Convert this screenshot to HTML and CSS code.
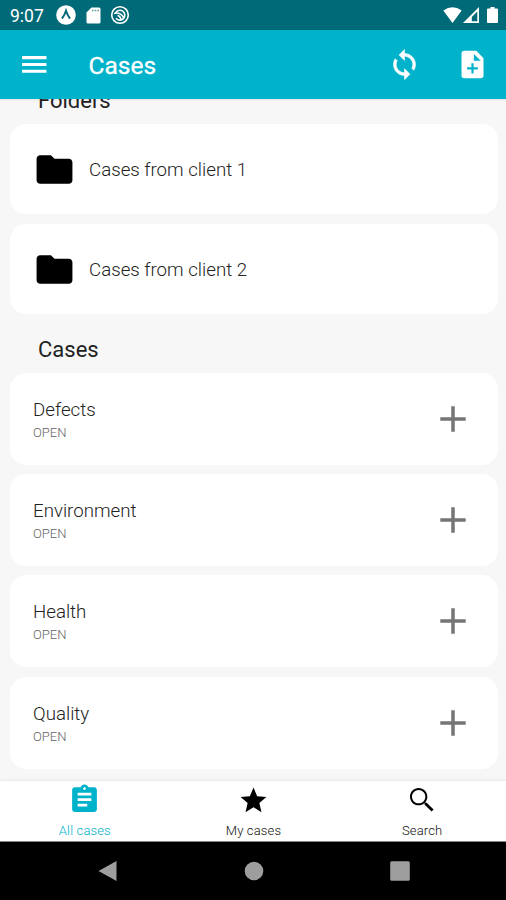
FILE: index.html
```html
<!DOCTYPE html>
<html lang="en">
<head>
<meta charset="utf-8">
<title>Cases</title>
<link rel="stylesheet" href="styles.css">
</head>
<body>
<div class="screen">
  <div class="status">
    <span class="time">9:07</span>
    <svg class="expo" viewBox="0 0 20 20"><circle cx="10" cy="10" r="9.800" fill="#fff"/><path d="M6 13.500Q8.500 10.500 10 5.800Q11.500 10.500 14 13.500" fill="none" stroke="#00697a" stroke-width="2"/></svg>
    <svg class="sd" viewBox="0 0 15 17"><path d="M5.500 .5H13a1.500 1.500 0 0 1 1.500 1.500v13a1.500 1.500 0 0 1-1.500 1.500H2A1.500 1.500 0 0 1 .5 15V5.500z" fill="#fff"/><path d="M6 3.500h1.500M8.800 3.500h1.500M11.500 3.500H13" stroke="#00697a" stroke-opacity=".7" stroke-width="1.500"/></svg>
    <svg class="swirl" viewBox="0 0 20 20" fill="none" stroke="#fff"><circle cx="10" cy="10" r="8.300" stroke-width="1.600"/><path d="M5.500 8A4.900 4.900 0 1 1 6 13.200M4 8.500Q10 6.500 13.500 12.500M7.500 10.500Q9.500 10.500 11 14" stroke-width="1.600"/></svg>
    <span class="grow"></span>
    <svg class="wifi" viewBox="0 0 19 16"><path d="M.3 3.500Q9.500-3.200 18.700 3.500L9.500 16z" fill="#fff"/></svg>
    <svg class="signal" viewBox="0 0 16 16"><path d="M16 0v16H0zM14.300 4.500L8.800 10v4.300h5.500z" fill="#fff" fill-rule="evenodd"/></svg>
    <svg class="battery" viewBox="0 0 11 16"><path d="M3.500 0h4v1.500H10a1 1 0 0 1 1 1V15a1 1 0 0 1-1 1H1a1 1 0 0 1-1-1V2.500a1 1 0 0 1 1-1h2.500z" fill="#fff"/></svg>
  </div>
  <header class="appbar">
    <svg class="icon menu" viewBox="0 0 24 24"><path d="M3 18.100h18v-2.300H3zm0-5h18v-2.300H3zm0-7.300v2.300h18V5.800z"/></svg>
    <h1>Cases</h1>
    <svg class="icon sync" viewBox="0 0 24 24"><path d="M12 4V1L8 5l4 4V6c3.310 0 6 2.690 6 6 0 1.010-.25 1.970-.7 2.800l1.460 1.460C19.540 15.030 20 13.570 20 12c0-4.420-3.580-8-8-8zm0 14c-3.310 0-6-2.690-6-6 0-1.010.25-1.970.7-2.800L5.240 7.740C4.460 8.970 4 10.430 4 12c0 4.420 3.580 8 8 8v3l4-4-4-4z"/></svg>
    <svg class="icon" viewBox="0 0 24 24"><path fill-rule="evenodd" d="M6 2h8.800L20 7.500V20a2 2 0 0 1-2 2H6a2 2 0 0 1-2-2V4a2 2 0 0 1 2-2zM13 4.300v4.900h5zM11.200 11v3H8.100v1.600h3.100v3h1.600v-3h3.100v-1.600h-3.100v-3z"/></svg>
  </header>
  <main class="content">
    <h2 class="folders-title">Folders</h2>
    <section class="folders">
      <div class="folder"><svg viewBox="0 0 24 24"><path d="M10 4H4c-1.100 0-2 .9-2 2v12c0 1.100.9 2 2 2h16c1.100 0 2-.9 2-2V8c0-1.100-.9-2-2-2h-8z"/></svg><span>Cases from client 1</span></div>
      <div class="folder"><svg viewBox="0 0 24 24"><path d="M10 4H4c-1.100 0-2 .9-2 2v12c0 1.100.9 2 2 2h16c1.100 0 2-.9 2-2V8c0-1.100-.9-2-2-2h-8z"/></svg><span>Cases from client 2</span></div>
    </section>
    <h2 class="cases-title">Cases</h2>
    <section class="cases">
      <div class="case"><div><h3>Defects</h3><p>OPEN</p></div><svg viewBox="0 0 26 26"><path d="M13 .3v25.400M.3 13h25.400"/></svg></div>
      <div class="case"><div><h3>Environment</h3><p>OPEN</p></div><svg viewBox="0 0 26 26"><path d="M13 .3v25.400M.3 13h25.400"/></svg></div>
      <div class="case"><div><h3>Health</h3><p>OPEN</p></div><svg viewBox="0 0 26 26"><path d="M13 .3v25.400M.3 13h25.400"/></svg></div>
      <div class="case"><div><h3>Quality</h3><p>OPEN</p></div><svg viewBox="0 0 26 26"><path d="M13 .3v25.400M.3 13h25.400"/></svg></div>
    </section>
  </main>
  <nav class="tabs">
    <div class="tab active"><svg viewBox="0 0 24 24"><path d="M19 3h-4.180C14.400 1.840 13.300 1 12 1s-2.400.84-2.820 2H5c-1.100 0-2 .9-2 2v14c0 1.100.9 2 2 2h14c1.100 0 2-.9 2-2V5c0-1.100-.9-2-2-2zm-7 0c.55 0 1 .45 1 1s-.45 1-1 1-1-.45-1-1 .45-1 1-1zm2 14H7v-2h7zm3-4H7v-2h10zm0-4H7V7h10z"/></svg><span>All cases</span></div>
    <div class="tab"><svg class="star" viewBox="0 0 24 24"><path d="M12 17.270L18.180 21l-1.640-7.030L22 9.240l-7.190-.61L12 2 9.190 8.630 2 9.240l5.460 4.730L5.820 21z"/></svg><span>My cases</span></div>
    <div class="tab"><svg class="search" viewBox="0 0 24 24"><path d="M15.500 14h-.79l-.28-.27C15.410 12.590 16 11.110 16 9.500 16 5.910 13.090 3 9.500 3S3 5.910 3 9.500 5.910 16 9.500 16c1.610 0 3.090-.59 4.230-1.570l.27.28v.79l5.200 5.190L20.690 19.200zm-6 .5C6.740 14.500 4.500 12.260 4.500 9.500S6.740 4.500 9.500 4.500 14.500 6.740 14.500 9.500 12.260 14.500 9.500 14.500z"/></svg><span>Search</span></div>
  </nav>
  <div class="system">
    <svg viewBox="0 0 22 22"><path d="M19.500 1v20L1.500 11z"/></svg>
    <svg viewBox="0 0 22 22"><circle cx="11" cy="11" r="9.300"/></svg>
    <svg viewBox="0 0 22 22"><rect x="1.200" y="1.200" width="19.600" height="19.600" rx="1.500"/></svg>
  </div>
</div>
</body>
</html>
```
FILE: styles.css
```css
* { box-sizing: border-box; margin: 0; padding: 0; }
body { font-family: Roboto, "Liberation Sans", sans-serif; }
svg { display: block; flex: none; }
.screen { width: 506px; height: 900px; display: flex; flex-direction: column; overflow: hidden; background: #f7f7f7; }

.status { height: 30px; flex: none; display: flex; align-items: center; padding: 0 8px 0 10px; background: #006a78; color: #fff; }
.time { width: 46px; font-size: 17.500px; line-height: 30px; padding-top: 2px; }
.expo { width: 20px; height: 20px; margin-right: 10px; }
.sd { width: 15px; height: 17px; margin-right: 9px; }
.swirl { width: 20px; height: 20px; }
.grow { flex: 1; }
.wifi { width: 19px; height: 16px; margin-right: 1px; }
.signal { width: 16px; height: 16px; margin-right: 8px; }
.battery { width: 11px; height: 16px; }

.appbar { height: 69px; flex: none; display: flex; align-items: center; padding: 0 17px 0 18px; background: #00b2ca; color: #fff; position: relative; box-shadow: 0 1px 2px rgba(0,0,0,.08); }
.appbar h1 { flex: 1; margin-left: 38px; font-size: 24.500px; font-weight: 400; -webkit-text-stroke: .3px #fff; line-height: 30px; padding-top: 2px; }
.icon { width: 33px; height: 33px; fill: currentColor; }
.menu { width: 32.500px; }
.sync { margin-right: 35px; stroke: currentColor; stroke-width: .4; }

.content { height: 682px; flex: none; overflow: hidden; padding: 0 8px 0 10px; }
h2 { margin-left: 28px; font-size: 22px; line-height: 28px; font-weight: 400; color: #222; }
.folders-title { margin-top: -12px; margin-bottom: 9px; }
.folders { display: grid; gap: 10px; }
.folder { height: 90px; border-radius: 16px; background: #fff; display: flex; align-items: center; padding-left: 23px; }
.folder svg { width: 43px; height: 43px; }
.folder span { margin-left: 13px; font-size: 18.700px; padding-top: 2px; font-weight: 300; color: #222; }
.cases-title { margin-top: 22px; margin-bottom: 8.500px; }
.cases { display: grid; gap: 9.400px; }
.case { height: 92px; border-radius: 16px; background: #fff; display: flex; align-items: center; justify-content: space-between; padding: 0 32.500px 0 23px; }
.case h3 { font-size: 18.700px; line-height: 26px; padding-top: 2px; font-weight: 300; color: #222; }
.case p { font-size: 13px; line-height: 20px; font-weight: 300; color: #666; }
.case svg { width: 26px; height: 26px; stroke: #757575; stroke-width: 3.500; }

.tabs { height: 61px; flex: none; display: grid; grid-template-columns: repeat(3, 1fr); background: #fff; border-bottom: 1px solid #888; box-shadow: 0 -1px 2px rgba(0,0,0,.07); position: relative; }
.tab { display: flex; flex-direction: column; align-items: center; padding: 2px 0 0 1px; color: #000; }
.tab svg { width: 33px; height: 33px; fill: currentColor; }
.tab .star { width: 31px; height: 31px; margin: 2px 0 0; }
.tab .search { width: 32px; height: 32px; margin: 1px 0 0; }
.tab span { font-size: 13px; line-height: 18px; margin-top: 6px; font-weight: 300; letter-spacing: .15px; color: #111; }
.tab.active, .tab.active span { color: #00b2ca; }

.system { flex: 1; display: flex; align-items: center; justify-content: center; gap: 124px; padding-left: 1px; background: #000; }
.system svg { width: 22px; height: 22px; fill: #9e9e9e; }
```
